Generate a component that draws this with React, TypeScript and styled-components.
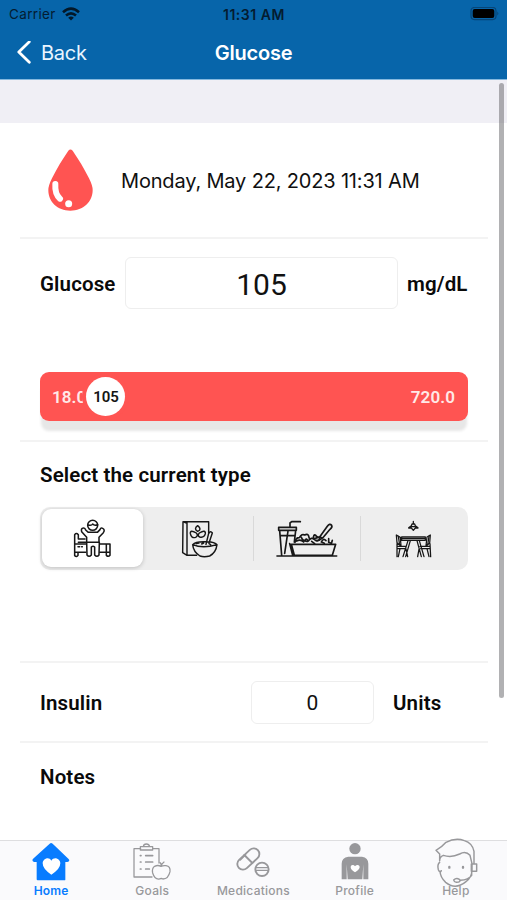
import React from "react";
import styled, { createGlobalStyle } from "styled-components";

const GlobalStyle = createGlobalStyle`
  * { box-sizing: border-box; }
  body { margin: 0; background: #fff; color: #101010; font-family: Roboto, sans-serif; }
  svg { display: block; flex: none; }
`;

const Screen = styled.div`
  position: relative;
  display: flex;
  flex-direction: column;
  width: 507px;
  height: 900px;
  overflow: hidden;
  background: #fff;
`;

const Header = styled.header`
  flex: none;
  height: 80px;
  background: #0765aa;
  border-bottom: 1px solid #85b9df;
  font-family: Inter, sans-serif;
`;

const StatusBar = styled.div`
  display: grid;
  grid-template-columns: 1fr auto 1fr;
  align-items: center;
  height: 28px;
  padding: 0 8px 0 9px;
  font-size: 13.5px;
  color: #041c31;
`;

const Carrier = styled.div`
  display: flex;
  align-items: center;
  gap: 6px;
  letter-spacing: 0.35px;
`;

const Clock = styled.div`
  font-size: 14px;
  font-weight: 600;
  letter-spacing: 0.55px;
`;

const BatterySlot = styled.div`
  display: flex;
  justify-content: flex-end;
`;

const NavBar = styled.nav`
  display: grid;
  grid-template-columns: 1fr auto 1fr;
  align-items: center;
  height: 50px;
  padding: 0 17px 1px;
  color: #fff;
`;

const BackButton = styled.button`
  display: flex;
  align-items: center;
  gap: 10px;
  padding: 0;
  border: 0;
  background: none;
  color: #e9f5ff;
  font: 400 20px Inter, sans-serif;
  letter-spacing: -0.25px;
`;

const NavTitle = styled.h1`
  margin: 0;
  font-size: 20px;
  font-weight: 600;
  letter-spacing: -0.2px;
`;

const Spacer = styled.div`
  flex: none;
  height: 43px;
  background: #f0eff5;
`;

const Content = styled.main`
  flex: 1;
  min-height: 0;
  overflow: hidden;
  padding: 0 19px 0 20px;
`;

const Section = styled.section<{ $height: number }>`
  height: ${(p) => p.$height}px;
  padding: 0 20px;
  border-bottom: 2px solid #f3f3f3;
`;

const DateSection = styled(Section)`
  display: flex;
  align-items: center;
  gap: 28px;
  padding-left: 28px;
`;

const DateText = styled.div`
  padding-top: 1px;
  font: 400 20px Inter, sans-serif;
  letter-spacing: -0.17px;
  white-space: nowrap;
`;

const Label = styled.span`
  font-size: 20.5px;
  font-weight: 600;
  line-height: 24px;
  letter-spacing: 0.13px;
  color: #0a0a0a;
  white-space: nowrap;
`;

const ReadingRow = styled.div`
  display: grid;
  grid-template-columns: 85px 273px 1fr;
  align-items: center;
  padding-top: 18px;
  margin-bottom: 63px;

  ${Label} { padding-top: 2px; }
  ${Label}:last-child { margin-left: 9px; }
`;

const Field = styled.input<{ $large?: boolean }>`
  width: ${(p) => (p.$large ? 273 : 123)}px;
  height: ${(p) => (p.$large ? 52 : 43)}px;
  padding: ${(p) => (p.$large ? "2px 0 0" : "1px 0 0")};
  border: 1px solid #eeeeee;
  border-radius: 6px;
  background: #fff;
  color: #111;
  text-align: center;
  font: 400 ${(p) => (p.$large ? 30 : 21)}px Roboto, sans-serif;
  outline: none;
`;

const Slider = styled.div`
  position: relative;
  display: flex;
  align-items: center;
  justify-content: space-between;
  height: 49px;
  padding: 1px 13px 0 12px;
  border-radius: 9px;
  background: #ff5452;
  box-shadow: 0 11px 3px -1px #e7e7e7;
  color: #ffe9e8;
  font-size: 17px;
  font-weight: 600;
  letter-spacing: 0.1px;
`;

const Thumb = styled.div`
  position: absolute;
  top: 5px;
  display: grid;
  place-items: center;
  width: 39px;
  height: 39px;
  border-radius: 50%;
  background: #fff;
  box-shadow: 0 0 0 4px #ff5452;
  color: #151515;
  font-size: 15px;
  letter-spacing: 0;
`;

const Segments = styled.div`
  display: grid;
  grid-template-columns: repeat(4, 1fr);
  height: 63px;
  margin-top: 20px;
  border-radius: 10px;
  background: #eeeeee;
`;

const Segment = styled.button<{ $active?: boolean; $divided?: boolean }>`
  position: relative;
  display: flex;
  align-items: center;
  justify-content: center;
  margin: ${(p) => (p.$active ? "2px 4px 3px 2px" : "0 1px 0 -1px")};
  padding: 0;
  border: 0;
  border-radius: 9px;
  background: ${(p) => (p.$active ? "#fff" : "transparent")};
  box-shadow: ${(p) => (p.$active ? "0 1px 4px rgba(0,0,0,.2)" : "none")};
  color: #171717;

  &::before {
    content: "";
    display: ${(p) => (p.$divided ? "block" : "none")};
    position: absolute;
    left: 0;
    top: 9px;
    bottom: 9px;
    width: 1px;
    background: #d9d9d9;
  }
`;

const TypeSection = styled(Section)`
  padding-top: 21px;
`;

const InsulinSection = styled(Section)`
  display: grid;
  grid-template-columns: 211px 142px 1fr;
  align-items: center;

  ${Label} { padding-top: 1px; }
`;

const NotesSection = styled.section`
  padding: 22px 20px;
`;

const ScrollThumb = styled.div`
  position: absolute;
  top: 83px;
  right: 3px;
  width: 5px;
  height: 615px;
  border-radius: 3px;
  background: rgba(100, 100, 104, 0.5);
`;

const TabBar = styled.nav`
  flex: none;
  display: grid;
  grid-template-columns: repeat(5, 101.2px);
  height: 60px;
  padding-left: 0.5px;
  border-top: 1px solid #dedee0;
  background: #fafafc;
`;

const Tab = styled.button<{ $active?: boolean }>`
  display: grid;
  grid-template-rows: 42px 16px;
  justify-items: center;
  align-items: center;
  align-content: start;
  padding: 0;
  border: 0;
  background: none;
  color: ${(p) => (p.$active ? "#087cff" : "#98989b")};
  font: ${(p) => (p.$active ? 600 : 500)} 12px Inter, sans-serif;
  letter-spacing: ${(p) => (p.$active ? 0.15 : 0.25)}px;

  svg { overflow: visible; }
`;

const TabLabel = styled.span`
  line-height: 16px;
`;

const WifiIcon = () => (
  <svg width="18" height="14" viewBox="0 0 18 14" fill="none" stroke="#031829" strokeWidth="2.6">
    <path d="M1 5.2Q9-1.8 17 5.2" />
    <path d="M4 8.5Q9 4.1 14 8.5" />
    <path d="M6.2 10.7Q9 8.2 11.8 10.7L9 13.6Z" fill="#031829" stroke="none" />
  </svg>
);

const BatteryIcon = () => (
  <svg width="29" height="14" viewBox="0 0 29 14">
    <rect x="1" y=".4" width="25" height="12.2" rx="3.5" fill="none" stroke="#074678" strokeWidth="1.2" />
    <rect x="2.7" y="2.1" width="21.6" height="8.8" rx="2" fill="#000" />
    <path d="M27.3 4.5v4q2-2 0-4" fill="#074678" />
  </svg>
);

const ChevronIcon = () => (
  <svg width="14" height="24" viewBox="0 0 14 24" fill="none" stroke="#fff" strokeWidth="2.8" strokeLinecap="round" strokeLinejoin="round">
    <path d="M12.3 .8 1.8 11 12.3 21.2" />
  </svg>
);

const DropIcon = () => (
  <svg width="45" height="62" viewBox="0 0 135 186">
    <path d="M61 5Q67-2 74 5C91 30 108 57 123 88Q134 110 134 123C134 158 106 185 67 185S1 158 1 123Q1 110 12 88C27 57 44 30 61 5Z" fill="#ff5452" />
    <path d="M22 105Q20 135 36 149" fill="none" stroke="#fff" strokeWidth="18" strokeLinecap="round" />
    <circle cx="62" cy="164" r="10.5" fill="#fff" />
  </svg>
);

const BedIcon = () => (
  <svg width="40" height="39" viewBox="130 58 120 117" fill="none" stroke="currentColor" strokeWidth="4.6" strokeLinecap="round" strokeLinejoin="round">
    <circle cx="189" cy="77" r="15" />
    <path d="M175 76Q186 79 189 73Q194 79 204 75" />
    <path d="M171 127V113L156 96Q153 86 161 85Q166 84 168 91L176 98H203L211 90Q213 83 219 86Q227 90 221 99L208 113V127" />
    <path d="M171 128H209L208 166Q202 174 195 166V142Q190 138 185 142V166Q178 174 172 166Z" />
    <path d="M135 161V105Q140 98 146 105V118H166M146 128H168M135 133H168M135 158H168M135 158V168Q141 173 145 167V158M210 133H241V158H210M230 134V167Q236 173 241 167V158M145 141H150M156 141H158" />
  </svg>
);

const CerealIcon = () => (
  <svg width="38" height="38" viewBox="452 58 114 114" fill="none" stroke="currentColor" strokeWidth="4.3" strokeLinecap="round" strokeLinejoin="round">
    <path d="M535 98V63H458L457 156 470 164V64M458 63 470 68M470 164H499" />
    <path d="M502 92Q489 85 502 75Q516 86 502 92ZM498 97Q479 86 480 99Q483 114 496 110Q505 105 498 97ZM507 97Q526 86 525 99Q522 112 508 109Q500 105 507 97Z" />
    <path d="M487 132Q495 123 519 123H530Q554 124 560 132Q557 156 538 166Q521 170 509 166Q489 154 487 132Q517 145 560 132M498 129 506 127M514 130 520 127M536 129 541 132M527 131 535 98Q541 89 546 97L536 127" />
  </svg>
);

const SaladIcon = () => (
  <svg width="62" height="38" viewBox="77 60 186 114" fill="none" stroke="currentColor" strokeWidth="5" strokeLinecap="round" strokeLinejoin="round">
    <path d="M80 168H259M85 82H138V91H85ZM88 92 94 166M136 92 132 126M89 107H134M119 81V69L124 65H150M113 93 103 160M123 133H256L246 166H132ZM118 131 127 166" />
    <path d="M134 127Q136 113 147 113Q155 100 163 105Q174 99 176 112Q181 121 170 124Q157 124 153 112M139 123Q150 116 160 126M164 121Q168 112 173 124M176 121Q184 111 189 117Q189 103 195 105Q200 114 208 111Q208 124 199 121M184 124 193 131M213 126Q219 113 227 122M215 127 222 130M235 116V127L242 130M246 121 243 131" />
    <path d="M208 111 231 79Q238 69 244 76Q247 81 239 88L217 114ZM208 111 192 116Q196 130 216 114" />
  </svg>
);

const DiningIcon = () => (
  <svg width="38" height="38" viewBox="435 60 114 114" fill="none" stroke="currentColor" strokeWidth="3.8" strokeLinecap="round" strokeLinejoin="round">
    <path d="M490 64V72M486 72H494L497 80H483ZM476 83 484 77M504 83 496 77M476 84H484L490 91 496 84H504" strokeWidth="3.8" />
    <path d="M455 111H526V121H455ZM474 122 459 170M481 122 467 170M501 122 514 170M508 122 522 170M439 105 441 128 453 137 451 112ZM541 105 539 129 528 137 531 111ZM441 131 441 170M540 131 542 170M443 139H468M443 146H465M510 139H538M512 146H538M450 146 445 170M531 146 537 170M468 147 473 170M507 147 503 170" />
    <path d="M445 109 449 135M537 109 533 135M457 116H524" />
  </svg>
);

const HomeIcon = () => (
  <svg width="38" height="38" viewBox="98 29 114 114">
    <path d="M151 31Q155 27 160 31L207 76Q214 83 204 86H198V139Q198 141 195 141H115Q112 141 112 138V86H104Q95 82 103 75Z" fill="currentColor" />
    <path d="M156 124Q130 107 130 90C130 76 149 68 156 82C164 68 183 76 183 90Q183 107 156 124Z" fill="#fff" />
  </svg>
);

const GoalsIcon = () => (
  <svg width="38" height="38" viewBox="400 29 114 114" fill="none" stroke="currentColor" strokeWidth="3.8" strokeLinecap="round" strokeLinejoin="round">
    <path d="M423 46H403V131H457M459 46H478V89M422 50V40H431Q432 32 440 32T450 40H459V50ZM432 40H450" />
    <path d="M422 67H424M438 67H459M422 86H424M438 86H459M422 107H424M438 107H449" strokeWidth="5" />
    <path d="M484 99Q474 94 465 99Q456 105 459 119Q465 139 479 137Q485 134 490 137Q506 137 511 115Q513 99 499 97Q490 96 484 99ZM484 99Q486 91 493 86M484 97Q486 91 481 88" />
  </svg>
);

const PillsIcon = () => (
  <svg width="34" height="32" viewBox="109 37 102 96" fill="none" stroke="currentColor" strokeWidth="5.6" strokeLinecap="round">
    <rect x="107" y="59" width="78" height="34" rx="17" transform="rotate(-43 146 76)" />
    <path d="M134 64 158 88" />
    <path d="M122 79 138 63" strokeWidth="4" />
    <circle cx="187" cy="107" r="20" />
    <path d="M169 102H205M169 110H205" strokeWidth="4" />
  </svg>
);

const ProfileIcon = () => (
  <svg width="28" height="38" viewBox="421 29 84 114" fill="currentColor">
    <circle cx="463" cy="46" r="17" />
    <path d="M443 70H484Q503 73 503 91V138H488V93L485 138H441L438 93V138H423V91Q423 73 443 70Z" />
    <path d="M463 117Q450 109 450 102C450 92 461 94 463 99C466 94 477 92 477 102Q476 109 463 117Z" fill="#fff" />
  </svg>
);

const HelpIcon = () => (
  <svg width="42" height="48" viewBox="104 9 126 144" fill="none" stroke="currentColor" strokeWidth="4.4" strokeLinecap="round" strokeLinejoin="round">
    <path d="M118 77Q118 65 129 61Q153 69 178 57Q196 46 209 61L215 86V108Q213 129 197 140Q165 166 136 142Q120 128 119 109M118 77V57L107 46Q124 37 137 22Q166 7 192 17Q216 24 221 49V84M118 82Q110 88 114 104Q119 116 123 107M213 87H229V109H213ZM214 110V121Q205 134 180 136M160 135Q168 127 177 133Q184 141 168 142Q161 141 160 135Z" />
    <path d="M147 96V98M188 96V98" strokeWidth="7" />
  </svg>
);

const mealTypes = [
  { name: "Wake up", icon: <BedIcon />, active: true },
  { name: "Breakfast", icon: <CerealIcon /> },
  { name: "Lunch", icon: <SaladIcon />, divided: true },
  { name: "Dinner", icon: <DiningIcon />, divided: true },
];

const tabs = [
  { name: "Home", icon: <HomeIcon />, active: true },
  { name: "Goals", icon: <GoalsIcon /> },
  { name: "Medications", icon: <PillsIcon /> },
  { name: "Profile", icon: <ProfileIcon /> },
  { name: "Help", icon: <HelpIcon /> },
];

export default function App() {
  const [glucose, setGlucose] = React.useState("105");
  const [insulin, setInsulin] = React.useState("0");
  const progress = Math.min(1, Math.max(0, (Number(glucose) - 18) / 702));

  return (
    <Screen>
      <GlobalStyle />
      <Header>
        <StatusBar>
          <Carrier>Carrier <WifiIcon /></Carrier>
          <Clock>11:31 AM</Clock>
          <BatterySlot><BatteryIcon /></BatterySlot>
        </StatusBar>
        <NavBar>
          <BackButton><ChevronIcon />Back</BackButton>
          <NavTitle>Glucose</NavTitle>
        </NavBar>
      </Header>
      <Spacer />
      <Content>
        <DateSection $height={116}>
          <DropIcon />
          <DateText>Monday, May 22, 2023 11:31 AM</DateText>
        </DateSection>
        <Section $height={203}>
          <ReadingRow>
            <Label>Glucose</Label>
            <Field $large value={glucose} onChange={(e) => setGlucose(e.target.value)} />
            <Label>mg/dL</Label>
          </ReadingRow>
          <Slider>
            <span>18.0</span>
            <span>720.0</span>
            <Thumb style={{ left: 2.5 + progress * 355 }}>{glucose}</Thumb>
          </Slider>
        </Section>
        <TypeSection $height={221}>
          <Label>Select the current type</Label>
          <Segments>
            {mealTypes.map((m) => (
              <Segment key={m.name} aria-label={m.name} $active={m.active} $divided={m.divided}>
                {m.icon}
              </Segment>
            ))}
          </Segments>
        </TypeSection>
        <InsulinSection $height={80}>
          <Label>Insulin</Label>
          <Field value={insulin} onChange={(e) => setInsulin(e.target.value)} />
          <Label>Units</Label>
        </InsulinSection>
        <NotesSection>
          <Label>Notes</Label>
        </NotesSection>
      </Content>
      <ScrollThumb />
      <TabBar>
        {tabs.map((t) => (
          <Tab key={t.name} $active={t.active}>
            {t.icon}
            <TabLabel>{t.name}</TabLabel>
          </Tab>
        ))}
      </TabBar>
    </Screen>
  );
}
